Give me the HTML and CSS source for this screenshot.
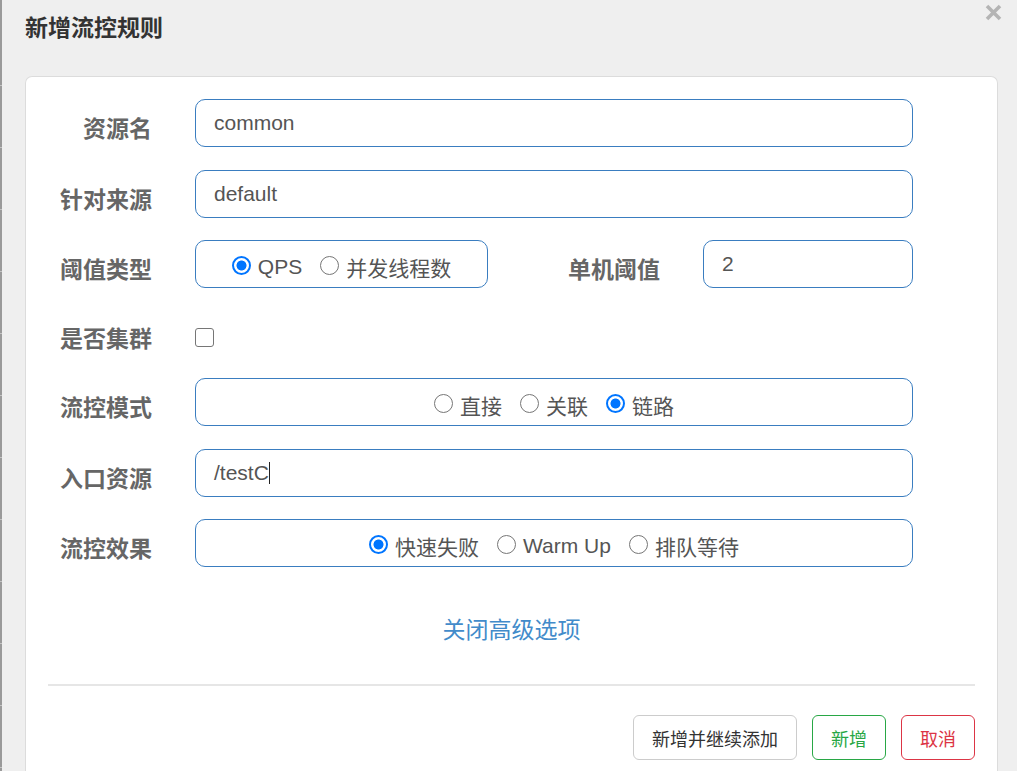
FILE: index.html
```html
<!DOCTYPE html>
<html lang="zh-CN">
<head>
<meta charset="utf-8">
<title>新增流控规则</title>
<link rel="stylesheet" href="styles.css">
</head>
<body>
<div class="page">
  <div class="edge"></div>
  <div class="modal">
    <div class="modal-header">
      <h1 class="title">新增流控规则</h1>
      <span class="close" aria-label="close">
        <svg width="17" height="17" viewBox="0 0 17 17"><path d="M2 2 L15 15 M15 2 L2 15" stroke="#b4b4b4" stroke-width="3.6" stroke-linecap="butt" fill="none"/></svg>
      </span>
    </div>
    <div class="card">
      <div class="row row-wide">
        <div class="label">资源名</div>
        <div class="control"><div class="field">common</div></div>
      </div>
      <div class="row">
        <div class="label">针对来源</div>
        <div class="control"><div class="field">default</div></div>
      </div>
      <div class="row">
        <div class="label">阈值类型</div>
        <div class="control split">
          <div class="field radios short">
            <label class="opt"><input type="radio" name="grade" checked>QPS</label>
            <label class="opt"><input type="radio" name="grade">并发线程数</label>
          </div>
          <div class="label inner">单机阈值</div>
          <div class="field small">2</div>
        </div>
      </div>
      <div class="row check-row">
        <div class="label">是否集群</div>
        <div class="control"><input class="check" type="checkbox"></div>
      </div>
      <div class="row row-wide">
        <div class="label">流控模式</div>
        <div class="control">
          <div class="field radios">
            <label class="opt"><input type="radio" name="mode">直接</label>
            <label class="opt"><input type="radio" name="mode">关联</label>
            <label class="opt"><input type="radio" name="mode" checked>链路</label>
          </div>
        </div>
      </div>
      <div class="row">
        <div class="label">入口资源</div>
        <div class="control"><div class="field">/testC<span class="caret"></span></div></div>
      </div>
      <div class="row">
        <div class="label">流控效果</div>
        <div class="control">
          <div class="field radios">
            <label class="opt"><input type="radio" name="effect" checked>快速失败</label>
            <label class="opt"><input type="radio" name="effect">Warm Up</label>
            <label class="opt"><input type="radio" name="effect">排队等待</label>
          </div>
        </div>
      </div>
      <div class="advanced"><a class="link" href="#">关闭高级选项</a></div>
      <hr class="divider">
      <div class="actions">
        <button class="btn btn-default">新增并继续添加</button>
        <button class="btn btn-success">新增</button>
        <button class="btn btn-danger">取消</button>
      </div>
    </div>
  </div>
</div>
</body>
</html>
```

FILE: styles.css
```css
html, body {
  margin: 0;
  padding: 0;
  height: 100%;
  overflow: hidden;
}
body {
  background: #efefef;
  font-family: "Liberation Sans", "Noto Sans CJK SC", sans-serif;
  color: #555;
}
.page {
  display: flex;
  min-height: 100%;
}
.edge {
  width: 2px;
  flex: 0 0 2px;
  background: repeating-linear-gradient(to bottom, #9a9a9a 0 61px, #c4c4c4 61px 62px);
  background-position: 0 24px;
}
.modal {
  position: relative;
  flex: 1;
  padding: 0 19px 0 23px;
}
.modal-header {
  padding-top: 10px;
  height: 76px;
  box-sizing: border-box;
}
.title {
  margin: 0;
  font-family: "Noto Sans CJK SC", sans-serif;
  font-size: 23px;
  line-height: 32px;
  font-weight: 700;
  color: #333;
}
.close {
  position: absolute;
  top: 4px;
  right: 15px;
  width: 17px;
  height: 17px;
  display: block;
}
.close svg { display: block; }
.card {
  background: #fff;
  border: 1px solid #dcdcdc;
  border-bottom: none;
  border-radius: 7px 7px 0 0;
  padding: 22px 22px 40px 22px;
  min-height: 700px;
  box-sizing: border-box;
}
.row {
  display: flex;
  align-items: center;
  height: 48px;
  margin-bottom: 22px;
}
.row.row-wide {
  margin-bottom: 23px;
}
.row.check-row {
  height: 46px;
}
.label {
  width: 104px;
  flex: 0 0 104px;
  text-align: right;
  font-family: "Noto Sans CJK SC", sans-serif;
  font-size: 23px;
  font-weight: 700;
  color: #666;
  padding-top: 8px;
  margin-right: 43px;
  line-height: 1;
}
.label.inner {
  width: 172px;
  flex: 0 0 172px;
  margin-right: 43px;
}
.control {
  width: 718px;
  flex: 0 0 718px;
  display: flex;
  align-items: center;
}
.field {
  box-sizing: border-box;
  width: 100%;
  height: 48px;
  border: 1px solid #3a7dc0;
  border-radius: 10px;
  padding: 0 18px;
  display: flex;
  align-items: center;
  font-size: 21px;
  color: #555;
  background: #fff;
}
.field.short {
  width: 293px;
  flex: 0 0 293px;
}
.field.small {
  width: 210px;
  flex: 0 0 210px;
}
.radios {
  justify-content: center;
  padding-top: 6px;
}
.opt {
  display: inline-flex;
  align-items: center;
  margin: 0 9px;
  font-size: 21px;
  color: #555;
  white-space: nowrap;
}
.opt input {
  -webkit-appearance: none;
  appearance: none;
  box-sizing: border-box;
  flex: 0 0 19px;
  width: 19px;
  height: 19px;
  margin: 0 7px 3px 0;
  border: 1px solid #767676;
  border-radius: 50%;
  background: #fff;
}
.opt input:checked {
  border: 2px solid #0075ff;
  background: radial-gradient(circle, #0075ff 0 4.6px, #fff 5.4px);
}
.check {
  -webkit-appearance: none;
  appearance: none;
  box-sizing: border-box;
  width: 19px;
  height: 19px;
  margin: 8px 0 0 0;
  border: 1px solid #767676;
  border-radius: 3px;
  background: #fff;
}
.caret {
  display: inline-block;
  width: 1px;
  height: 22px;
  background: #222;
}
.advanced {
  text-align: center;
  margin-top: 46px;
  line-height: 30px;
}
.link {
  font-family: "Noto Sans CJK SC", sans-serif;
  font-size: 23px;
  color: #428bca;
  text-decoration: none;
}
.divider {
  border: none;
  border-top: 2px solid #e6e6e6;
  margin: 36px 0 0 0;
  height: 0;
}
.actions {
  display: flex;
  justify-content: flex-end;
  gap: 15px;
  margin-top: 29px;
}
.btn {
  height: 45px;
  padding: 0 18px;
  font-family: "Noto Sans CJK SC", sans-serif;
  font-size: 18px;
  background: #fff;
  border-radius: 6px;
  border: 1px solid #ccc;
  color: #333;
  cursor: pointer;
}
.btn-success {
  border-color: #28a745;
  color: #28a745;
}
.btn-danger {
  border-color: #dc3545;
  color: #dc3545;
}
```
